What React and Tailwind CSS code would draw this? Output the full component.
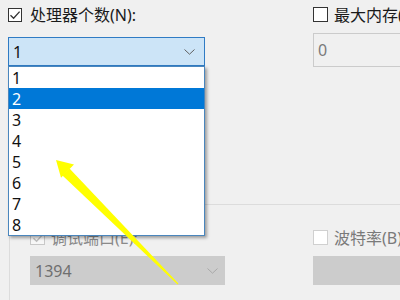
import React from "react";

const FONT = { fontFamily: '"Noto Sans", "Noto Sans CJK SC", sans-serif' };

function Check({ color = "#333" }) {
  return (
    <svg width="12" height="12" viewBox="0 0 12 12" className="block">
      <path d="M1.5 6.2 L4.6 9.2 L10.6 2.6" fill="none" stroke={color} strokeWidth="1.3" />
    </svg>
  );
}

function Chevron({ color = "#606060" }) {
  return (
    <svg width="11" height="6" viewBox="0 0 11 6" className="block">
      <path d="M0.5 0.5 L5.5 5.2 L10.5 0.5" fill="none" stroke={color} strokeWidth="1" />
    </svg>
  );
}

export default function App() {
  const items = ["1", "2", "3", "4", "5", "6", "7", "8"];
  return (
    <div className="relative w-[400px] h-[300px] overflow-hidden bg-[#f0f0f0]" style={FONT}>
      {/* top row */}
      <div className="flex pt-[7px]">
        <div className="relative ml-[8px] w-[197px] shrink-0">
          <div className="flex items-center h-[15px]">
            <div className="w-[14px] h-[14px] border border-[#333] bg-white flex items-center justify-center shrink-0">
              <Check />
            </div>
            <span className="ml-[8px] text-[16px] leading-none text-[#1a1a1a] whitespace-nowrap">处理器个数(N):</span>
          </div>
          <div className="mt-[15px] h-[29px] border border-[#2f7bc4] bg-[#cce4f7] flex items-center justify-between pl-[4px] pr-[9px]">
            <span className="text-[16px] leading-none text-[#111]">1</span>
            <Chevron />
          </div>
          {/* dropdown list */}
          <div className="absolute left-0 top-full -mt-[1px] w-[197px] border border-[#4a86bd] bg-white shadow-[2px_2px_3px_rgba(0,0,0,0.35)] z-10">
            {items.map((it) => (
              <div
                key={it}
                className={
                  it === "2"
                    ? "h-[21px] flex items-center pl-[3px] text-[16px] leading-none bg-[#0078d7] text-white"
                    : "h-[21px] flex items-center pl-[3px] text-[16px] leading-none text-[#111]"
                }
              >
                {it}
              </div>
            ))}
          </div>
        </div>
        <div className="ml-[108px] flex-1 min-w-0">
          <div className="flex items-center h-[15px]">
            <div className="w-[15px] h-[15px] border border-[#333] bg-white shrink-0" />
            <span className="ml-[6px] text-[16px] leading-none text-[#1a1a1a] whitespace-nowrap">最大内存(</span>
          </div>
          <div className="mt-[11px] h-[34px] border border-[#cbcbcb] bg-[#f0f0f0] flex items-center pl-[4px] w-[100px]">
            <span className="text-[16px] leading-none text-[#7a7a7a]">0</span>
          </div>
        </div>
      </div>

      {/* group box */}
      <div className="mt-[137px] ml-[9px] h-[200px] border-t border-l border-[#dcdcdc] flex pl-[20px] pt-[25px]">
        <div className="w-[195px] shrink-0">
          <div className="flex items-center h-[15px]">
            <div className="w-[15px] h-[15px] border border-[#c8c8c8] bg-[#f7f7f7] flex items-center justify-center shrink-0">
              <Check color="#bdbdbd" />
            </div>
            <span className="ml-[6px] text-[16px] leading-none text-[#8a8a8a] whitespace-nowrap">调试端口(E):</span>
          </div>
          <div className="mt-[11px] h-[29px] bg-[#cccccc] flex items-center justify-between pl-[5px] pr-[7px]">
            <span className="text-[16px] leading-none text-[#6f6f6f]">1394</span>
            <Chevron color="#a8a8a8" />
          </div>
        </div>
        <div className="ml-[88px] flex-1 min-w-0">
          <div className="flex items-center h-[15px]">
            <div className="w-[15px] h-[15px] border border-[#d0d0d0] bg-white shrink-0" />
            <span className="ml-[6px] text-[16px] leading-none text-[#7a7a7a] whitespace-nowrap">波特率(B)</span>
          </div>
          <div className="mt-[11px] h-[29px] bg-[#cccccc] w-[100px]" />
        </div>
      </div>

      {/* yellow arrow */}
      <svg className="absolute inset-0 z-20 pointer-events-none" width="400" height="300" viewBox="0 0 400 300">
        <polygon points="69.5,168.5 62.5,175.5 177.6,284.4 178.4,283.6" fill="#ffff00" />
        <polygon points="56,160 74,164.6 61,177.8" fill="#ffff00" />
      </svg>
    </div>
  );
}
